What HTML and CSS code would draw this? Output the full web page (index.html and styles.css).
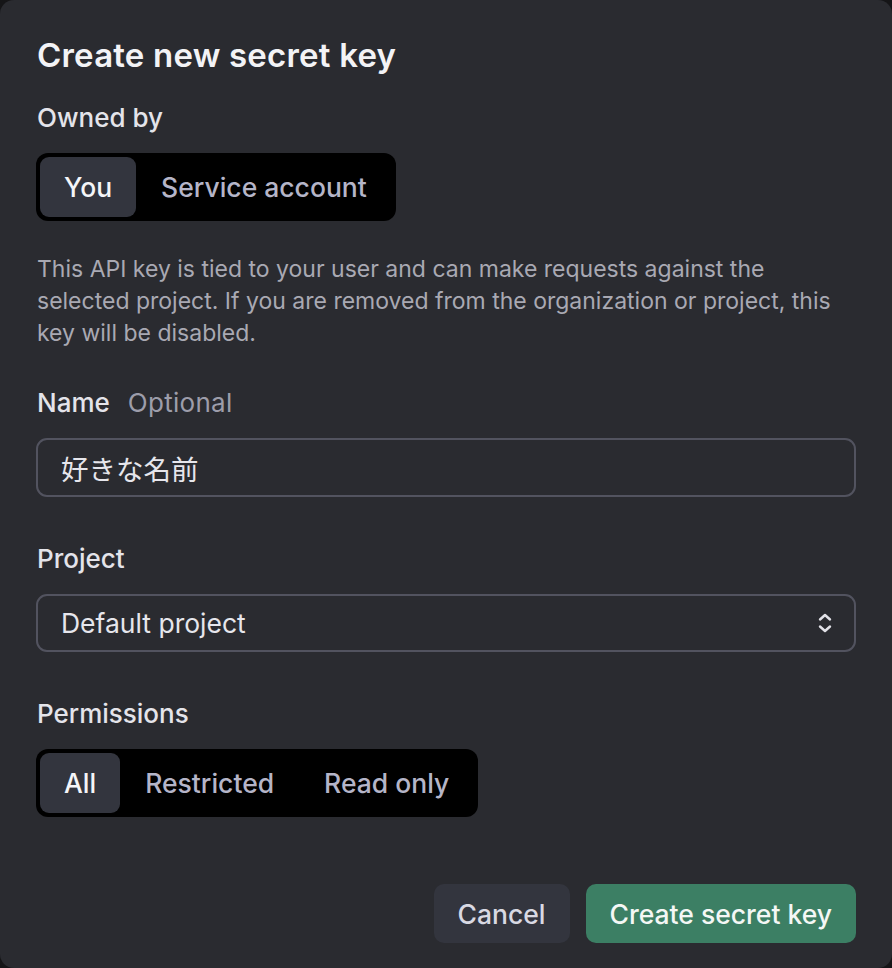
FILE: index.html
```html
<!DOCTYPE html>
<html lang="en">
<head>
<meta charset="utf-8">
<title>Create new secret key</title>
<link rel="stylesheet" href="styles.css">
</head>
<body>
<div class="dialog">
  <h1 class="title">Create new secret key</h1>

  <div class="label">Owned by</div>
  <div class="segmented">
    <button class="seg active">You</button>
    <button class="seg">Service account</button>
  </div>

  <p class="desc">This API key is tied to your user and can make requests against the selected project. If you are removed from the organization or project, this key will be disabled.</p>

  <div class="label">Name <span class="optional">Optional</span></div>
  <div class="input"><span class="cjk">好きな名前</span></div>

  <div class="label field-gap">Project</div>
  <div class="input select">
    <span>Default project</span>
    <svg class="chev" width="16" height="24" viewBox="0 0 16 24" fill="none" stroke="#e2e2e8" stroke-width="2.4" stroke-linecap="round" stroke-linejoin="round">
      <path d="M3 8.5 L8 4 L13 8.5"/>
      <path d="M3 15.5 L8 20 L13 15.5"/>
    </svg>
  </div>

  <div class="label field-gap">Permissions</div>
  <div class="segmented">
    <button class="seg active">All</button>
    <button class="seg">Restricted</button>
    <button class="seg">Read only</button>
  </div>

  <div class="actions">
    <button class="btn cancel">Cancel</button>
    <button class="btn primary">Create secret key</button>
  </div>
</div>
</body>
</html>
```

FILE: styles.css
```css
html, body {
  margin: 0;
  padding: 0;
  background: #151517;
}
body {
  font-family: Inter, "Noto Sans CJK JP", sans-serif;
  color: #ececf1;
}
.dialog {
  box-sizing: border-box;
  width: 892px;
  height: 968px;
  background: #2a2b30;
  border-radius: 14px;
  padding: 37px 36px 0 36px;
  display: flex;
  flex-direction: column;
  align-items: flex-start;
}
.title {
  margin: 0 0 29px 1px;
  font-size: 33px;
  line-height: 36px;
  font-weight: 600;
  color: #f3f3f6;
  letter-spacing: 0.2px;
}
.label {
  margin-left: 1px;
  font-size: 26px;
  line-height: 32px;
  font-weight: 500;
  color: #e4e4ea;
  margin-bottom: 19px;
}
.field-gap {
  margin-top: 46px;
}
.optional {
  font-weight: 400;
  color: #9d9daa;
  margin-left: 11px;
  letter-spacing: 0.3px;
}
.segmented {
  display: flex;
  background: #000;
  border-radius: 12px;
  padding: 4px;
}
.seg {
  font-family: inherit;
  border: none;
  background: transparent;
  height: 60px;
  padding: 0 25px;
  border-radius: 9px;
  font-size: 26.5px;
  font-weight: 500;
  color: #b5b5c8;
  cursor: pointer;
}
.seg.active {
  background: #33353e;
  color: #f5f5f8;
  padding: 0 24px;
}
.desc {
  margin: 32px 0 38px 1px;
  font-size: 23px;
  line-height: 32px;
  color: #a9a9b3;
  max-width: 805px;
}
.input {
  box-sizing: border-box;
  width: 820px;
  height: 59px;
  border: 2px solid #52535f;
  border-radius: 11px;
  padding: 0 23px;
  display: flex;
  align-items: center;
  font-size: 26.5px;
  color: #e6e6ec;
}
.cjk {
  font-size: 27.5px;
}
.select {
  height: 58px;
  justify-content: space-between;
  padding-right: 21px;
}
.chev {
  display: block;
}
.actions {
  margin-top: 67px;
  align-self: flex-end;
  display: flex;
  gap: 16px;
}
.btn {
  font-family: inherit;
  border: none;
  height: 59px;
  border-radius: 10px;
  font-size: 26.5px;
  font-weight: 500;
  padding: 0 24px;
  cursor: pointer;
}
.cancel {
  background: #33353e;
  color: #d9d9e3;
}
.primary {
  background: #3c7f64;
  color: #f4f7f5;
}
```
